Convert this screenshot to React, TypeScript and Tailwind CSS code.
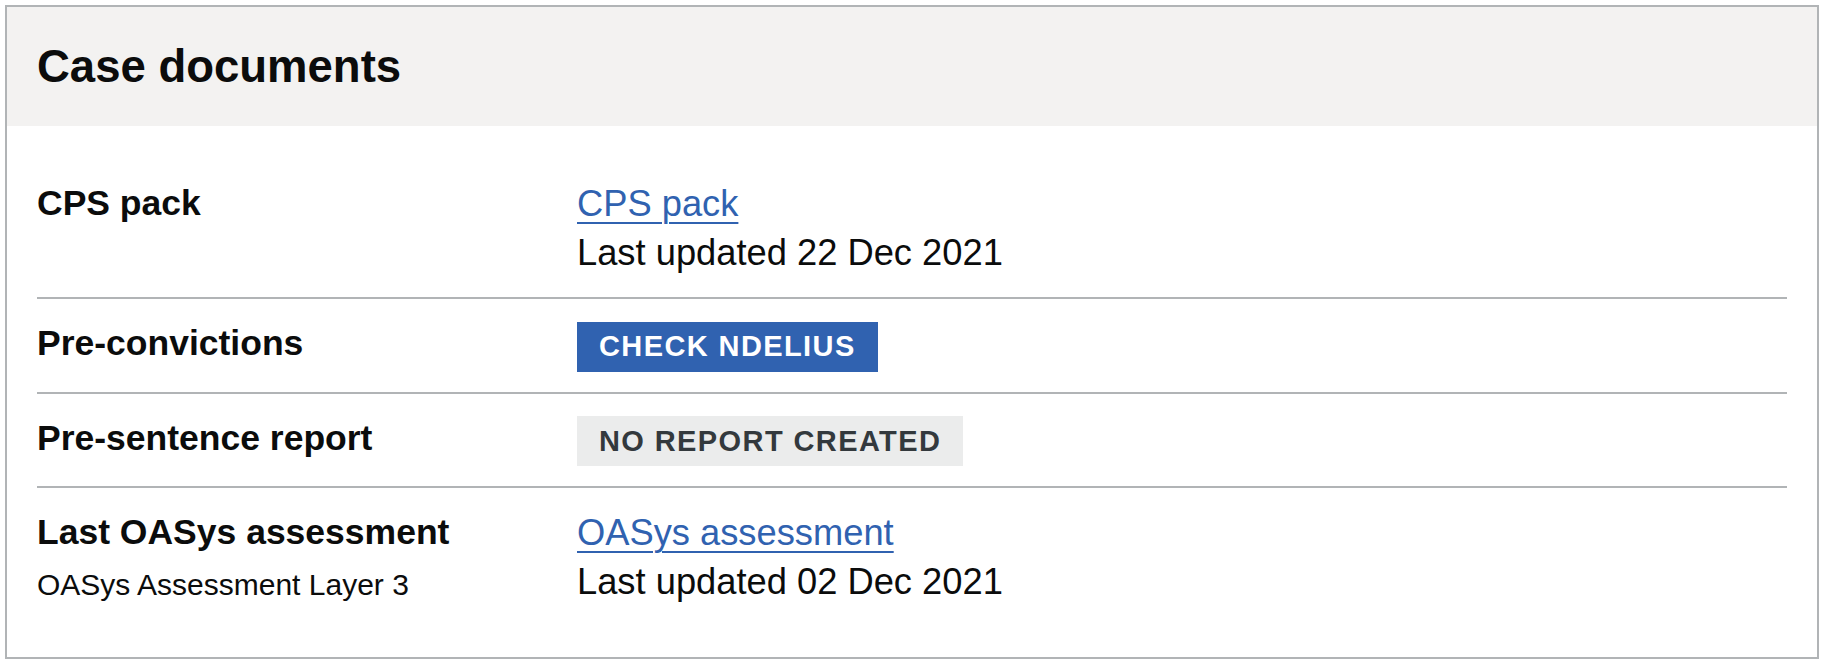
import React from 'react';

// Case documents summary card

type Row = {
    label: string;
    hint?: string;
    value: React.ReactNode;
};

function Tag({ children, tone }: { children: React.ReactNode; tone: 'blue' | 'grey' }) {
    const colours = tone === 'blue' ? 'bg-[#3062b0] text-white' : 'bg-[#ebecec] text-[#33393d]';
    return (
        <span
            className={`mt-px inline-flex h-[50px] items-center px-[22px] text-[29px] font-bold uppercase leading-none tracking-[1.4px] ${colours}`}
        >
            {children}
        </span>
    );
}

function DocLink({ children }: { children: React.ReactNode }) {
    return (
        <a
            href="#"
            className="text-[#3062b0] underline decoration-2 underline-offset-[6px]"
        >
            {children}
        </a>
    );
}

export default function App() {
    const rows: Row[] = [
        {
            label: 'CPS pack',
            value: (
                <>
                    <div><DocLink>CPS pack</DocLink></div>
                    <div>Last updated 22 Dec 2021</div>
                </>
            ),
        },
        {
            label: 'Pre-convictions',
            value: <Tag tone="blue">Check nDelius</Tag>,
        },
        {
            label: 'Pre-sentence report',
            value: <Tag tone="grey">No report created</Tag>,
        },
        {
            label: 'Last OASys assessment',
            hint: 'OASys Assessment Layer 3',
            value: (
                <>
                    <div><DocLink>OASys assessment</DocLink></div>
                    <div>Last updated 02 Dec 2021</div>
                </>
            ),
        },
    ];

    return (
        <div className="min-h-screen bg-white p-[5px] font-['Liberation_Sans',Arial,sans-serif] text-[#0b0c0c]">
            <div className="border-2 border-[#b1b4b6]">
                <div className="bg-[#f3f2f1] px-[30px] py-[31px]">
                    <h2 className="text-[45.5px] font-bold leading-[57px]">Case documents</h2>
                </div>
                <dl className="px-[30px] pt-[33px] pb-[31px]">
                    {rows.map((row, i) => (
                        <div
                            key={row.label}
                            className={`grid grid-cols-[540px_1fr] items-start py-[20px] ${
                                i < rows.length - 1 ? 'border-b-2 border-[#b1b4b6]' : ''
                            }`}
                        >
                            <dt>
                                <div className="text-[35.5px] font-bold leading-[49px]">{row.label}</div>
                                {row.hint && (
                                    <div className="mt-[8px] text-[30px] leading-[40px]">{row.hint}</div>
                                )}
                            </dt>
                            <dd className="min-h-[51px] text-[36.3px] leading-[49px]">{row.value}</dd>
                        </div>
                    ))}
                </dl>
            </div>
        </div>
    );
}
